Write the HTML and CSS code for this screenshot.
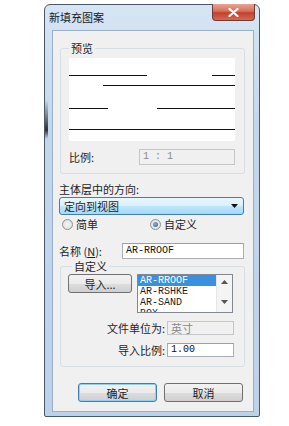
FILE: index.html
```html
<!DOCTYPE html>
<html lang="zh">

<head>
    <meta charset="UTF-8">
    <meta name="viewport" content="width=device-width, initial-scale=1.0">
    <title>新填充图案</title>
    <link rel="stylesheet" href="styles.css">
</head>

<body>
    <div class="window">
        <div class="titlebar">
            <span class="title">新填充图案</span>
            <span class="close">
                <svg width="11" height="9" viewBox="0 0 11 9">
                    <path d="M1.5 1 L9.5 8 M9.5 1 L1.5 8" stroke="#fff" stroke-width="2.2" stroke-linecap="round" />
                </svg>
            </span>
        </div>

        <div class="client">
            <fieldset class="group preview-group">
                <legend>预览</legend>
                <!-- preview of the hatch pattern -->
                <svg class="preview" width="166" height="83" viewBox="0 0 166 83">
                    <g stroke="#111" stroke-width="1">
                        <line x1="0" y1="17.5" x2="78" y2="17.5" />
                        <line x1="143" y1="17.5" x2="166" y2="17.5" />
                        <line x1="34" y1="27.5" x2="166" y2="27.5" />
                        <line x1="0" y1="50.5" x2="39" y2="50.5" />
                        <line x1="88" y1="50.5" x2="166" y2="50.5" />
                        <line x1="0" y1="71.5" x2="166" y2="71.5" />
                    </g>
                </svg>
                <div class="ratio-row">
                    <span>比例:</span>
                    <span class="field disabled">1 : 1</span>
                </div>
            </fieldset>

            <div class="label">主体层中的方向:</div>
            <div class="select">
                <span>定向到视图</span>
                <svg width="7" height="4" viewBox="0 0 7 4"><path d="M0 0 H7 L3.5 4 Z" fill="#111" /></svg>
            </div>

            <div class="radios">
                <label class="radio"><span class="dot"></span>简单</label>
                <label class="radio checked"><span class="dot"></span>自定义</label>
            </div>

            <div class="name-row">
                <span>名称 (<u>N</u>):</span>
                <span class="field">AR-RROOF</span>
            </div>

            <fieldset class="group custom-group">
                <legend>自定义</legend>
                <div class="import-row">
                    <button class="btn import">导入...</button>
                    <div class="listbox">
                        <ul>
                            <li class="selected">AR-RROOF</li>
                            <li>AR-RSHKE</li>
                            <li>AR-SAND</li>
                            <li>BOX</li>
                        </ul>
                        <div class="scrollbar">
                            <svg width="7" height="4" viewBox="0 0 7 4"><path d="M0 4 H7 L3.5 0 Z" fill="#555" /></svg>
                            <svg width="7" height="4" viewBox="0 0 7 4"><path d="M0 0 H7 L3.5 4 Z" fill="#555" /></svg>
                        </div>
                    </div>
                </div>
                <div class="prop-row">
                    <span>文件单位为:</span>
                    <span class="field disabled cjk">英寸</span>
                </div>
                <div class="prop-row">
                    <span>导入比例:</span>
                    <span class="field">1.00</span>
                </div>
            </fieldset>

            <div class="actions">
                <button class="btn default">确定</button>
                <button class="btn">取消</button>
            </div>
        </div>
    </div>
</body>

</html>
```

FILE: styles.css
```css
body {
    margin: 0;
    padding: 4px 0 0 44px;
    background: #fff;
    font-family: "Noto Sans CJK SC", "Noto Sans", sans-serif;
    font-size: 11px;
    color: #1e1e1e;
}

.window {
    width: 214px;
    border: 1px solid #4a5868;
    border-radius: 6px 6px 2px 2px;
    background:
        linear-gradient(to bottom, rgba(0, 0, 0, 0) 95px, rgba(20, 20, 20, 0.85) 125px, rgba(0, 0, 0, 0) 134px) left top / 3px 100% no-repeat,
        linear-gradient(to bottom, #d6e5f4 0%, #c3d7ec 30%, #bcd2ea 100%);
}

.titlebar {
    height: 25px;
    display: flex;
    justify-content: space-between;
    align-items: flex-start;
    padding: 0 4px 0 4px;
}

.title {
    margin-top: 5px;
    line-height: 14px;
    color: #1a1a1a;
}

.close {
    margin-top: -1px;
    width: 43px;
    height: 17px;
    box-sizing: border-box;
    border: 1px solid #6d3a36;
    border-top: none;
    border-radius: 0 0 4px 4px;
    background: linear-gradient(to bottom, #e8a493 0%, #d7705c 45%, #c4402a 55%, #d26a55 100%);
    display: flex;
    align-items: center;
    justify-content: center;
}

.client {
    margin: 0 5px 4px 7px;
    height: 380px;
    border: 1px solid #9aaec6;
    background: #f0f0f0;
}

.group {
    margin: 0 8px 0 7px;
    border: 1px solid #d5dfe5;
    border-radius: 3px;
    min-width: 0;
}

.group legend {
    padding: 0 2px;
    line-height: 14px;
}

.preview-group {
    margin-top: 10px;
    padding: 3px 9px 8px 8px;
}

.preview-group legend {
    margin-left: 0;
}

.preview {
    display: block;
    background: #fff;
}

.ratio-row {
    margin-top: 8px;
    display: flex;
    justify-content: space-between;
    align-items: center;
}

.field {
    box-sizing: border-box;
    height: 15px;
    border: 1px solid #abadb3;
    border-top-color: #9ea0a6;
    background: #fff;
    font-family: "Liberation Mono", monospace;
    font-size: 10px;
    line-height: 13px;
    padding-left: 3px;
    color: #111;
}

.field.disabled {
    background: #f0f0f0;
    border-color: #c4c6ca;
    color: #8a8a8a;
}

.field.cjk {
    font-family: "Noto Sans CJK SC", sans-serif;
    font-size: 11px;
}

.ratio-row .field {
    width: 96px;
    height: 16px;
    line-height: 14px;
}

.label {
    margin: 8px 0 0 6px;
    line-height: 14px;
}

.select {
    margin: 1px 9px 0 6px;
    height: 18px;
    box-sizing: border-box;
    border: 1px solid #3c7fb1;
    border-radius: 3px;
    background: linear-gradient(to bottom, #eaf6fd 0%, #d9f0fc 50%, #bee6fd 51%, #a7d9f5 100%);
    display: flex;
    justify-content: space-between;
    align-items: center;
    padding: 0 5px 0 4px;
    line-height: 14px;
}

.radios {
    margin: 2px 0 0 9px;
    display: flex;
    height: 14px;
    line-height: 14px;
}

.radio {
    display: flex;
    align-items: center;
    gap: 3px;
}

.radio + .radio {
    margin-left: 52px;
}

.dot {
    width: 9px;
    height: 9px;
    border: 1px solid #8e8f8f;
    border-radius: 50%;
    background: radial-gradient(circle, #f4f4f4 0%, #dcdcdc 100%);
    position: relative;
}

.checked .dot::after {
    content: "";
    position: absolute;
    left: 2px;
    top: 2px;
    width: 5px;
    height: 5px;
    border-radius: 50%;
    background: radial-gradient(circle at 40% 40%, #8fb3d4 0%, #2e5d8a 100%);
}

.name-row {
    margin: 12px 9px 0 6px;
    display: flex;
    justify-content: space-between;
    align-items: center;
    line-height: 14px;
}

.name-row u {
    text-decoration: underline;
}

.name-row .field {
    width: 122px;
    height: 16px;
    line-height: 14px;
}

.custom-group {
    margin-top: 0;
    padding: 1px 10px 9px 6px;
}

.custom-group legend {
    margin-left: 5px;
}

.import-row {
    display: flex;
    gap: 5px;
    align-items: flex-start;
}

.btn {
    box-sizing: border-box;
    height: 19px;
    padding: 0;
    border: 1px solid #707070;
    border-radius: 3px;
    background: linear-gradient(to bottom, #f2f2f2 0%, #ebebeb 50%, #dddddd 51%, #cfcfcf 100%);
    font-family: "Noto Sans CJK SC", sans-serif;
    font-size: 11px;
    line-height: 16px;
    color: #1e1e1e;
}

.btn.import {
    width: 64px;
    margin-left: 1px;
}

.listbox {
    width: 96px;
    height: 39px;
    box-sizing: border-box;
    border: 1px solid #828790;
    background: #fff;
    display: flex;
    overflow: hidden;
}

.listbox ul {
    flex: 1;
    margin: 0;
    padding: 0;
    list-style: none;
    font-family: "Liberation Mono", monospace;
    font-size: 10px;
    line-height: 11px;
}

.listbox li {
    padding-left: 2px;
}

.listbox li.selected {
    background: #3b8fe1;
    color: #fff;
}

.scrollbar {
    width: 16px;
    background: #f4f4f4;
    border-left: 1px solid #e6e6e6;
    display: flex;
    flex-direction: column;
    justify-content: space-between;
    align-items: center;
    padding: 5px 0 8px;
    box-sizing: border-box;
}

.prop-row {
    margin-top: 8px;
    display: grid;
    grid-template-columns: 1fr 67px;
    gap: 2px;
    align-items: center;
    line-height: 14px;
}

.prop-row + .prop-row {
    margin-top: 8px;
}

.prop-row span:first-child {
    text-align: right;
}

.prop-row .field {
    height: 14px;
    line-height: 12px;
}

.actions {
    margin: 16px 0 0 25px;
    display: flex;
    gap: 7px;
}

.actions .btn {
    width: 79px;
}

.btn.default {
    border-color: #3c7fb1;
    box-shadow: inset 0 0 0 1px #8fd0f3;
}
```
